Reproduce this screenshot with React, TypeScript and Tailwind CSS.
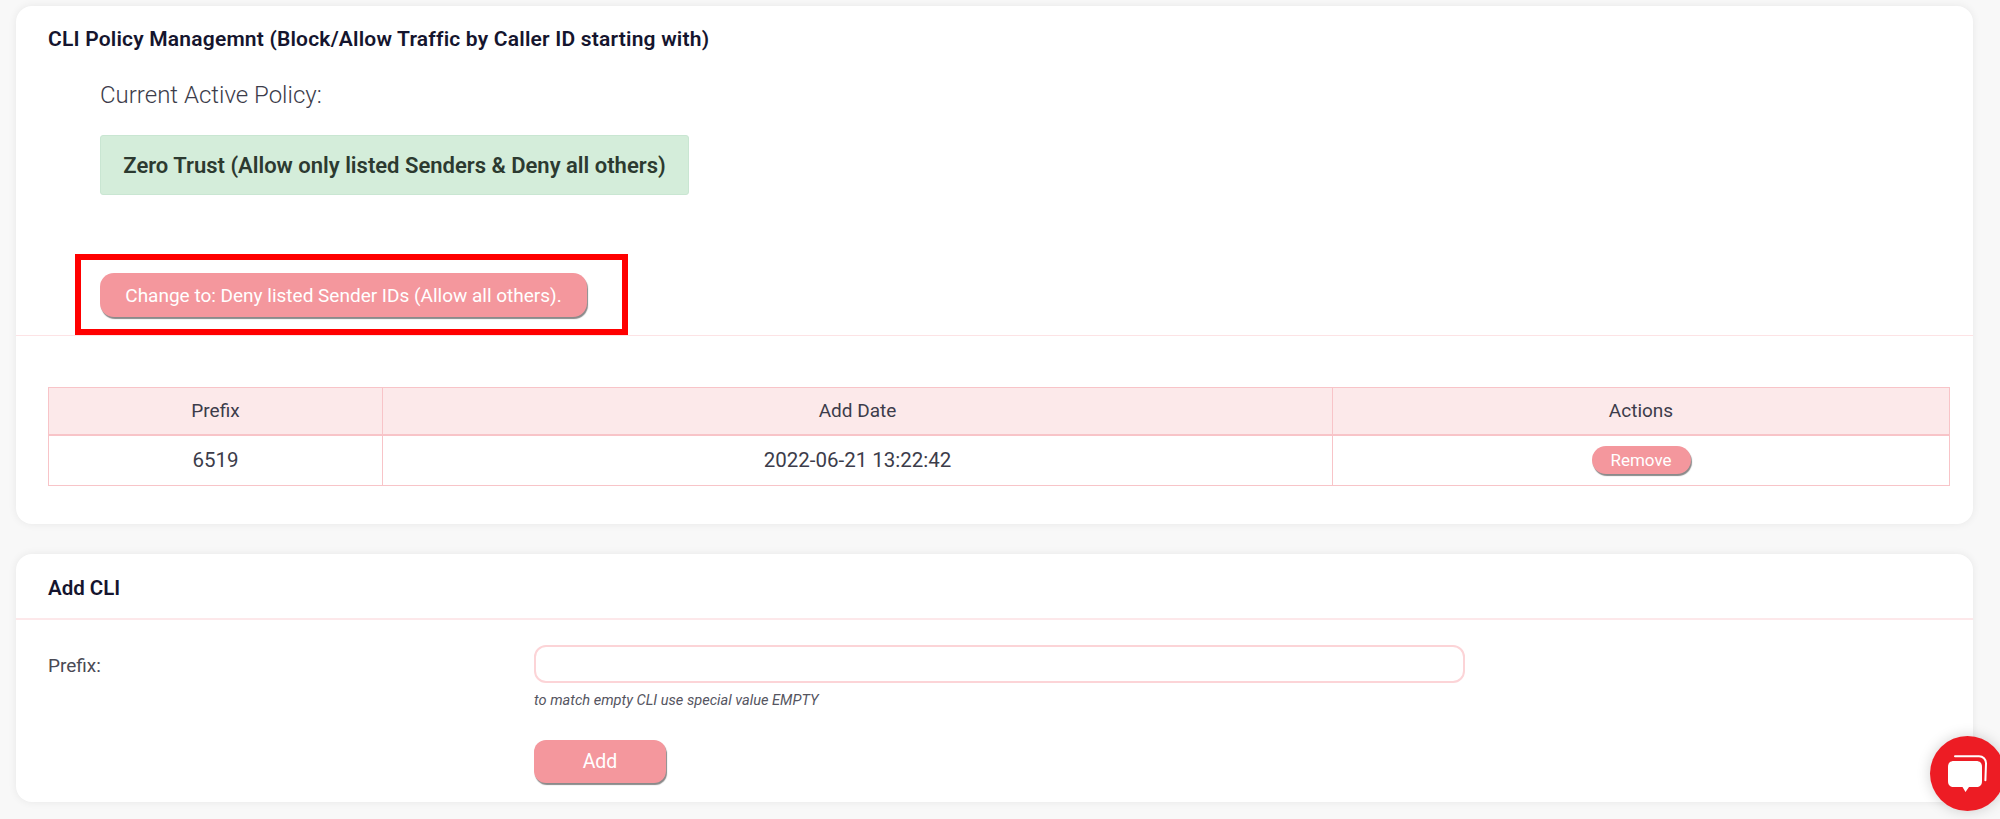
const font = "font-['Roboto','Liberation_Sans',sans-serif]";

function PinkButton({ label, className }: { label: string; className: string }) {
  return (
    <button className={`flex items-center justify-center bg-[#f4979d] text-white shadow-[1px_2px_1px_#8a8a8a] ${className}`}>
      {label}
    </button>
  );
}

function ChatBubble() {
  return (
    <div className="fixed bottom-[8px] right-[-5px] flex h-[75px] w-[75px] items-center justify-center rounded-full bg-[#ed1c24] shadow-[0_0_14px_rgba(0,0,0,0.18)]">
      <svg width="40" height="38" viewBox="0 0 40 38" fill="none">
        <path d="M7 1.2h24c4 0 7 3 7 7l-.6 17" stroke="#fff" strokeWidth="2" strokeLinecap="round" />
        <path d="M6 6h22c4 0 6 2 6 6v14c0 4-2 6-6 6h-7l-3.5 5-3-5H6c-4 0-6-2-6-6V12c0-4 2-6 6-6z" fill="#fff" />
      </svg>
    </div>
  );
}

export default function App() {
  return (
    <div className={`${font} h-[819px] overflow-hidden bg-[#f8f8f8] pl-4 pr-[27px] pt-1.5 text-[#33333f]`}>
      {/* policy card */}
      <section className="h-[518px] rounded-[16px] bg-white shadow-[0_0_8px_rgba(0,0,0,0.07)]">
        <div className="relative h-[329px] px-8">
          <h2 className="pt-[21px] text-[21px] leading-6 font-semibold tracking-[0.2px] text-[#15152e]">
            CLI Policy Managemnt (Block/Allow Traffic by Caller ID starting with)
          </h2>
          <div className="pl-[52px]">
            <p className="mt-[30px] text-[24px] leading-7 font-light text-[#3c3c4a]">Current Active Policy:</p>
            <div className="mt-[26px] flex h-[60px] w-[589px] items-center justify-center rounded-[3px] border border-[#c9e6d2] bg-[#d4edda] text-[22px] font-semibold text-[#2c3a30]">
              Zero Trust (Allow only listed Senders &amp; Deny all others)
            </div>
            <PinkButton
              label="Change to: Deny listed Sender IDs (Allow all others)."
              className="mt-[78px] h-[44px] w-[487px] rounded-[14px] pt-0.5 text-[19px]"
            />
          </div>
          {/* annotation drawn over the screenshot */}
          <div className="absolute left-[59px] top-[248px] h-[81px] w-[553px] border-[6px] border-[#ff0000]" />
        </div>
        <div className="border-t border-[#fde3e5] px-8 pt-[51px]">
          <table className="w-[1902px] table-fixed border-collapse text-center text-[19px] text-[#3c3c4a]">
            <thead>
              <tr className="h-[47px] bg-[#fce9ea]">
                <th className="w-[334px] border border-b-2 border-[#f8c4c8] font-normal">Prefix</th>
                <th className="w-[950px] border border-b-2 border-[#f8c4c8] font-normal">Add Date</th>
                <th className="border border-b-2 border-[#f8c4c8] font-normal">Actions</th>
              </tr>
            </thead>
            <tbody>
              <tr className="h-[51px] text-[20.5px]">
                <td className="border border-[#f8c4c8]">6519</td>
                <td className="border border-[#f8c4c8]">2022-06-21 13:22:42</td>
                <td className="border border-[#f8c4c8]">
                  <PinkButton label="Remove" className="mx-auto h-[28px] w-[99px] rounded-full text-[17px]" />
                </td>
              </tr>
            </tbody>
          </table>
        </div>
      </section>

      {/* add form */}
      <section className="mt-[30px] h-[248px] rounded-[16px] bg-white shadow-[0_0_8px_rgba(0,0,0,0.07)]">
        <div className="flex h-[66px] items-center border-b-2 border-[#fde8ea] px-8 pt-1">
          <h2 className="text-[20.5px] font-semibold text-[#15152e]">Add CLI</h2>
        </div>
        <div className="flex px-8 pt-[25px]">
          <label className="w-[486px] pt-[7px] text-[19px] leading-7 text-[#4a4a55]">Prefix:</label>
          <div>
            <input className="block h-[38px] w-[931px] rounded-[12px] border-2 border-[#fcd4d7] bg-white" />
            <p className="mt-[7px] text-[14.6px] leading-[20px] text-[#55555f] italic">to match empty CLI use special value EMPTY</p>
            <PinkButton label="Add" className="mt-[30px] h-[43px] w-[132px] rounded-[12px] text-[19.5px]" />
          </div>
        </div>
      </section>

      <ChatBubble />
    </div>
  );
}
